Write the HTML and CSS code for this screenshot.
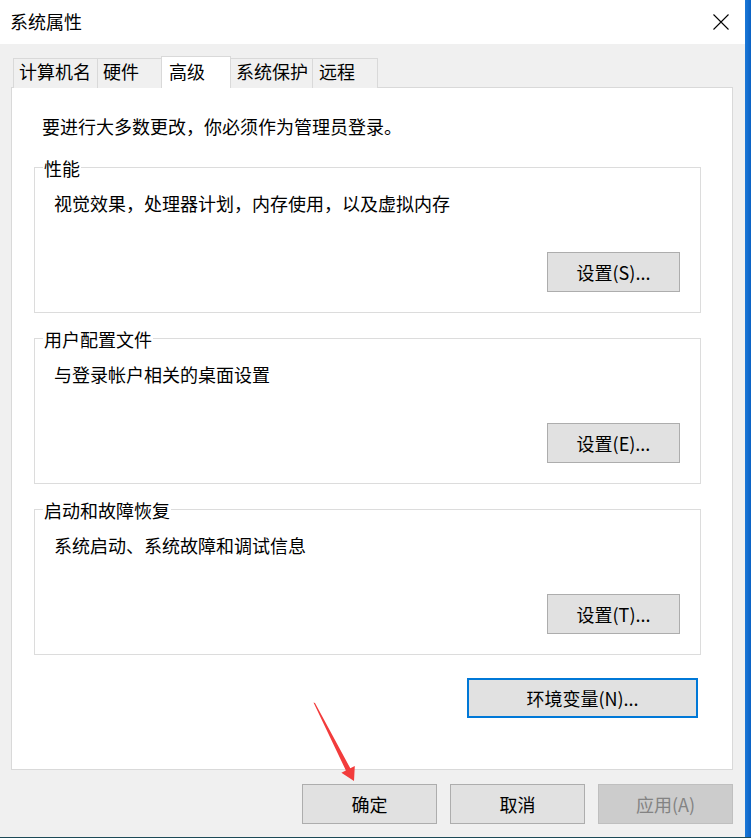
FILE: index.html
```html
<!DOCTYPE html>
<html>
<head>
<meta charset="UTF-8">
<title>系统属性</title>
<link rel="stylesheet" href="styles.css">
</head>
<body>
<div class="desktop">
 <div class="window">
  <div class="title-bar">
   <span class="title-text">系统属性</span>
   <svg class="close-icon" width="16" height="16" viewBox="0 0 16 16">
    <path d="M0.5 0.5 L15.5 15.5 M15.5 0.5 L0.5 15.5" stroke="#000" stroke-width="1.1" fill="none"/>
   </svg>
  </div>

  <div class="tab-strip">
   <div class="tab tab-name">计算机名</div>
   <div class="tab tab-hw">硬件</div>
   <div class="tab tab-active">高级</div>
   <div class="tab tab-protect">系统保护</div>
   <div class="tab tab-remote">远程</div>
  </div>

  <div class="tab-panel">
   <div class="intro-text">要进行大多数更改，你必须作为管理员登录。</div>

   <fieldset class="group first-group">
    <legend class="group-label">性能</legend>
    <div class="group-text">视觉效果，处理器计划，内存使用，以及虚拟内存</div>
    <div class="group-buttons"><div class="button">设置(S)...</div></div>
   </fieldset>

   <fieldset class="group">
    <legend class="group-label">用户配置文件</legend>
    <div class="group-text">与登录帐户相关的桌面设置</div>
    <div class="group-buttons"><div class="button">设置(E)...</div></div>
   </fieldset>

   <fieldset class="group">
    <legend class="group-label">启动和故障恢复</legend>
    <div class="group-text">系统启动、系统故障和调试信息</div>
    <div class="group-buttons"><div class="button">设置(T)...</div></div>
   </fieldset>

   <div class="env-row"><div class="button env-button">环境变量(N)...</div></div>
  </div>

  <div class="dialog-buttons">
   <div class="button wide-button">确定</div>
   <div class="button wide-button">取消</div>
   <div class="button wide-button disabled-button">应用(A)</div>
  </div>

  <svg class="pointer-arrow" width="50" height="88" viewBox="0 0 50 88">
   <polygon points="3.5,4.5 5,5 40.3,70.3 44.8,68 44,83 31.4,74.8 35.9,72.5" fill="#f23c3c"/>
  </svg>
 </div>
 <div class="desktop-edge"></div>
</div>
</body>
</html>
```

FILE: styles.css
```css
* {
 box-sizing: border-box;
}
body {
 margin: 0;
 background-color: #1c4a57;
 font-family: "Noto Sans CJK SC", "Noto Sans", sans-serif;
 font-size: 18px;
 line-height: 18px;
 color: #000000;
}
.desktop {
 display: flex;
 width: 751px;
 height: 837px;
}
.window {
 position: relative;
 width: 745px;
 height: 837px;
 background-color: #f0f0f0;
}
.desktop-edge {
 width: 6px;
 background: linear-gradient(to right, #1a78d8, #0b62c4);
}
.title-bar {
 display: flex;
 justify-content: space-between;
 align-items: flex-start;
 height: 44px;
 padding: 12px 16px 0 10px;
 background-color: #ffffff;
}
.close-icon {
 margin-top: 2px;
}

/* tabs */
.tab-strip {
 display: flex;
 align-items: flex-end;
 height: 32px;
 margin: 12px 0 -1px 13px;
}
.tab {
 height: 30px;
 padding: 3px 0 0 5px;
 border: 1px solid #d9d9d9;
 border-bottom: none;
 background-color: #f0f0f0;
 white-space: nowrap;
}
.tab-name {
 width: 85px;
}
.tab-hw {
 width: 66px;
 margin-left: -1px;
}
.tab-active {
 position: relative;
 z-index: 1;
 width: 70px;
 height: 32px;
 margin-left: -2px;
 padding: 5px 0 0 7px;
 background-color: #ffffff;
}
.tab-protect {
 width: 83px;
 margin-left: -1px;
}
.tab-remote {
 width: 66px;
 margin-left: -1px;
 padding-left: 6px;
}
.tab-panel {
 width: 722px;
 height: 683px;
 margin-left: 11px;
 padding: 29px 31px 0 22px;
 border: 1px solid #d9d9d9;
 background-color: #ffffff;
}
.intro-text {
 margin-left: 8px;
}

/* group boxes */
.group {
 width: 667px;
 min-width: 0;
 margin: 15px 0 0 0;
 padding: 0 20px 20px 19px;
 border: 1px solid #dcdcdc;
}
.first-group {
 margin-top: 22px;
}
.group-label {
 margin-left: -11px;
 padding: 2px 1px 0 1px;
 line-height: 18px;
}
.group-text {
 margin-top: 17px;
}
.group-buttons {
 display: flex;
 justify-content: flex-end;
 margin-top: 40px;
}

/* buttons */
.button {
 display: flex;
 align-items: center;
 justify-content: center;
 width: 133px;
 height: 40px;
 border: 1px solid #adadad;
 background-color: #e1e1e1;
 white-space: nowrap;
}
.env-row {
 display: flex;
 justify-content: flex-end;
 margin-top: 23px;
 padding-right: 3px;
}
.env-button {
 width: 231px;
 border: 2px solid #0078d7;
}
.dialog-buttons {
 display: flex;
 justify-content: flex-end;
 gap: 13px;
 margin-top: 14px;
 padding-right: 12px;
}
.wide-button {
 width: 135px;
}
.disabled-button {
 border-color: #bfbfbf;
 background-color: #cccccc;
 color: #838383;
}
.pointer-arrow {
 position: absolute;
 left: 310px;
 top: 698px;
 pointer-events: none;
}
```
